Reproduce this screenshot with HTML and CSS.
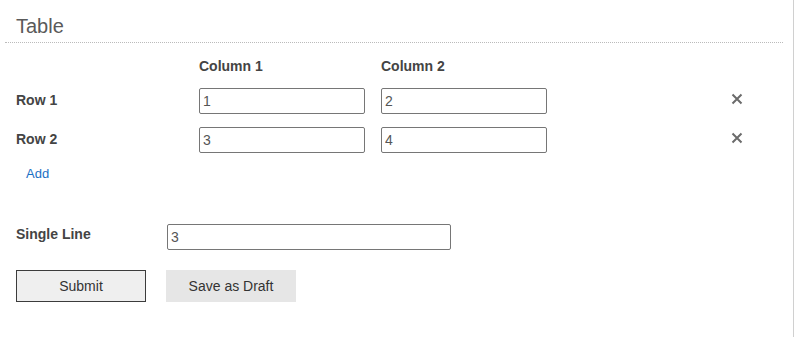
FILE: index.html
```
<!DOCTYPE html>
<html>
	<head>
		<meta charset="UTF-8">
		<title>Table</title>
		<link rel="stylesheet" href="styles.css">
	</head>
	<body>
		<div class="page">
			<div class="section">
				<h2 class="section_title">Table</h2>
				<div class="table_grid">
					<span></span>
					<span class="col_head">Column 1</span>
					<span class="col_head">Column 2</span>
					<span></span>

					<label class="row_label">Row 1</label>
					<input type="text" class="champ" value="1">
					<input type="text" class="champ" value="2">
					<button type="button" class="remove" title="Remove">
						<svg width="12" height="12" viewBox="0 0 12 12"><path d="M1.5 1.5 L10.5 10.5 M10.5 1.5 L1.5 10.5" stroke="#6b6b6b" stroke-width="2" fill="none"/></svg>
					</button>

					<label class="row_label">Row 2</label>
					<input type="text" class="champ" value="3">
					<input type="text" class="champ" value="4">
					<button type="button" class="remove" title="Remove">
						<svg width="12" height="12" viewBox="0 0 12 12"><path d="M1.5 1.5 L10.5 10.5 M10.5 1.5 L1.5 10.5" stroke="#6b6b6b" stroke-width="2" fill="none"/></svg>
					</button>
				</div>
				<a href="#" class="add_link">Add</a>
			</div>

			<div class="champ_box">
				<label for="single">Single Line</label>
				<input type="text" id="single" class="champ champ_long" value="3">
			</div>

			<div class="actions">
				<button type="submit" class="button button_submit">Submit</button>
				<button type="button" class="button button_draft">Save as Draft</button>
			</div>
		</div>
	</body>
</html>
```

FILE: styles.css
```
body {
	margin: 0;
	font-family: "Liberation Sans", Arial, sans-serif;
	color: #444;
	background: #fff;
}

.page {
	width: 794px;
	min-height: 337px;
	border-right: 1px solid #d0d0d0;
	box-sizing: border-box;
}

.section_title {
	margin: 0 10px 0 5px;
	padding: 14px 0 4px 11px;
	font-size: 20px;
	line-height: 24px;
	font-weight: normal;
	color: #5a5a5a;
	border-bottom: 1px dotted #bbb;
}

.table_grid {
	display: grid;
	grid-template-columns: 167px 166px 166px 1fr;
	column-gap: 16px;
	row-gap: 13px;
	align-items: center;
	margin-top: 15px;
	padding: 0 50px 0 16px;
}

.col_head, .row_label, .champ_box label {
	font-size: 14px;
	line-height: 17px;
	font-weight: bold;
	color: #444;
}

.row_label {
	margin-top: -2px;
}

.champ {
	height: 26px;
	padding: 0 3px;
	box-sizing: border-box;
	border: 1px solid #767676;
	border-radius: 2px;
	font-family: "Liberation Sans", Arial, sans-serif;
	font-size: 14px;
	color: #555;
	outline: none;
}

.remove {
	justify-self: end;
	width: 12px;
	height: 12px;
	padding: 0;
	margin-top: -4px;
	border: none;
	background: none;
	display: flex;
}

.add_link {
	display: inline-block;
	margin: 13px 0 0 26px;
	font-size: 13px;
	line-height: 15px;
	color: #1a6fc4;
	text-decoration: none;
}

.champ_box {
	display: flex;
	align-items: center;
	margin-top: 42px;
	padding-left: 16px;
}

.champ_box label {
	width: 151px;
	margin-top: -6px;
}

.champ_long {
	width: 284px;
}

.actions {
	display: flex;
	gap: 20px;
	margin-top: 20px;
	padding-left: 16px;
}

.button {
	width: 130px;
	height: 32px;
	font-family: "Liberation Sans", Arial, sans-serif;
	font-size: 14px;
	color: #333;
	border-radius: 0;
}

.button_submit {
	background-color: #efefef;
	border: 1px solid #3c3c3c;
}

.button_draft {
	background-color: #e6e6e6;
	border: none;
}
```
